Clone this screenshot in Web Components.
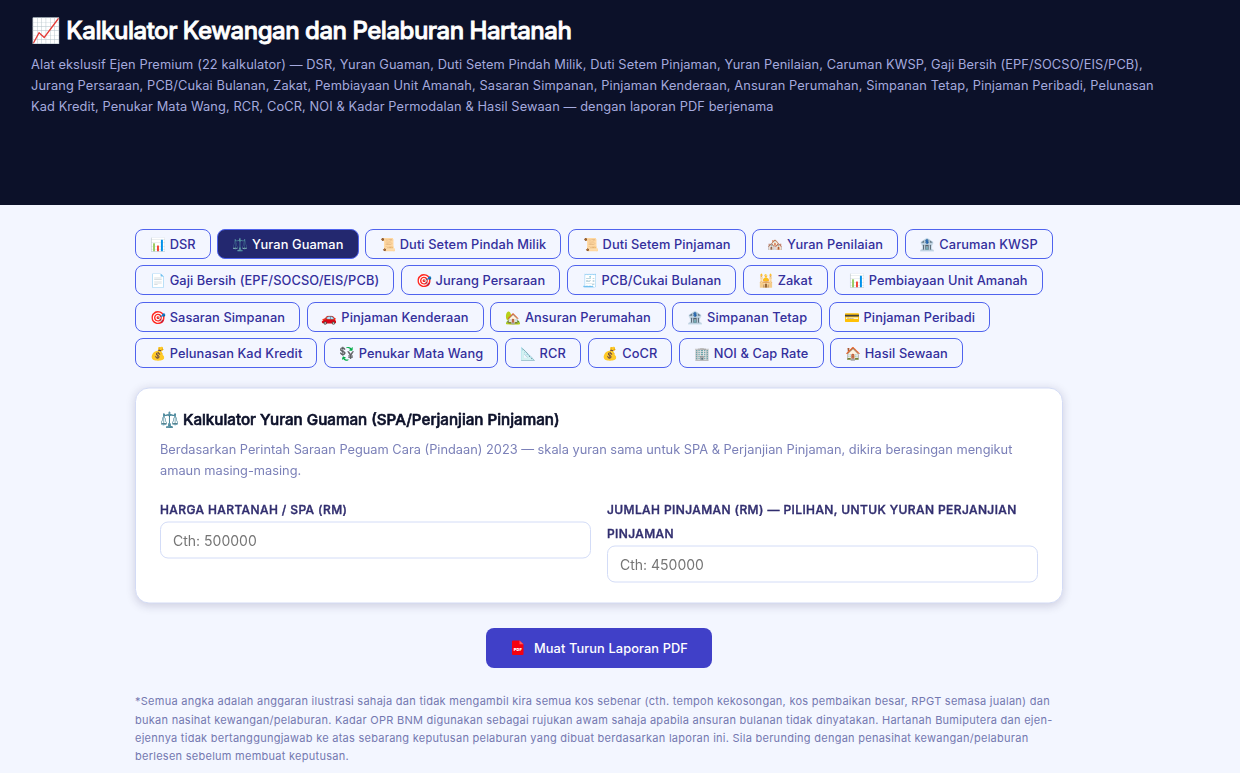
<!DOCTYPE html>
<html lang="ms">
<head>
<meta charset="utf-8">
<title>Kalkulator Kewangan dan Pelaburan Hartanah</title>
<style>
  body {
    margin: 0;
    height: 773px;
    overflow: hidden;
    background: #f3f6ff;
    font-family: Inter, "Noto Color Emoji", sans-serif;
    -webkit-font-smoothing: antialiased;
  }
</style>
</head>
<body>
<calc-page>
  <calc-header slot="header" heading="📈 Kalkulator Kewangan dan Pelaburan Hartanah">Alat ekslusif Ejen Premium (22 kalkulator) — DSR, Yuran Guaman, Duti Setem Pindah Milik, Duti Setem Pinjaman, Yuran Penilaian, Caruman KWSP, Gaji Bersih (EPF/SOCSO/EIS/PCB), Jurang Persaraan, PCB/Cukai Bulanan, Zakat, Pembiayaan Unit Amanah, Sasaran Simpanan, Pinjaman Kenderaan, Ansuran Perumahan, Simpanan Tetap, Pinjaman Peribadi, Pelunasan Kad Kredit, Penukar Mata Wang, RCR, CoCR, NOI &amp; Kadar Permodalan &amp; Hasil Sewaan — dengan laporan PDF berjenama</calc-header>
  <calc-tabs></calc-tabs>
  <calc-card heading="⚖️ Kalkulator Yuran Guaman (SPA/Perjanjian Pinjaman)">
    <span slot="note">Berdasarkan Perintah Saraan Peguam Cara (Pindaan) 2023 — skala yuran sama untuk SPA &amp; Perjanjian Pinjaman, dikira berasingan mengikut amaun masing-masing.</span>
    <calc-field placeholder="Cth: 500000">Harga Hartanah / SPA (RM)</calc-field>
    <calc-field placeholder="Cth: 450000">Jumlah Pinjaman (RM) — pilihan, untuk Yuran Perjanjian Pinjaman</calc-field>
  </calc-card>
  <pdf-button>Muat Turun Laporan PDF</pdf-button>
  <calc-disclaimer>*Semua angka adalah anggaran ilustrasi sahaja dan tidak mengambil kira semua kos sebenar (cth. tempoh kekosongan, kos pembaikan besar, RPGT semasa jualan) dan bukan nasihat kewangan/pelaburan. Kadar OPR BNM digunakan sebagai rujukan awam sahaja apabila ansuran bulanan tidak dinyatakan. Hartanah Bumiputera dan ejen-ejennya tidak bertanggungjawab ke atas sebarang keputusan pelaburan yang dibuat berdasarkan laporan ini. Sila berunding dengan penasihat kewangan/pelaburan berlesen sebelum membuat keputusan.</calc-disclaimer>
</calc-page>

<script>
class CalcPage extends HTMLElement {
  constructor() {
    super();
    const shadow = this.attachShadow({ mode: "open" });
    shadow.innerHTML = `
      <style>
      :host {
        display: block;
      }

      main {
        display: flex;
        flex-direction: column;
        width: 928px;
        margin-left: 135px;
        padding-top: 24px;
      }
      </style>
      <slot name="header"></slot>
      <main><slot></slot></main>
      `;
  }
}

class CalcHeader extends HTMLElement {
  constructor() {
    super();
    const shadow = this.attachShadow({ mode: "open" });
    shadow.innerHTML = `
      <style>
      :host {
        display: block;
        box-sizing: border-box;
        height: 205px;
        padding: 12px 73px 0 31px;
        background: #0c1129;
      }

      h1 {
        margin: 0 0 4px;
        color: #fff;
        font-size: 24px;
        font-weight: 500;
        line-height: 38px;
        letter-spacing: -0.02em;
        -webkit-text-stroke: 0.8px;
      }

      p {
        margin: 0;
        color: #a5aade;
        font-size: 12.8px;
        line-height: 21px;
        letter-spacing: 0.104px;
      }
      </style>
      <h1></h1>
      <p><slot></slot></p>
      `;
  }

  connectedCallback() {
    this.shadowRoot.querySelector("h1").textContent = this.getAttribute("heading");
  }
}

class CalcTab extends HTMLElement {
  constructor() {
    super();
    const shadow = this.attachShadow({ mode: "open" });
    shadow.innerHTML = `
      <style>
      :host {
        display: block;
      }

      button {
        display: block;
        box-sizing: border-box;
        height: 30px;
        margin: 0;
        padding: 1px 14.1px 0;
        border: 1px solid #4f63ee;
        border-radius: 8px;
        background: transparent;
        color: #332f9c;
        font: 500 12.8px/28px Inter, "Noto Color Emoji", sans-serif;
        letter-spacing: 0.1px;
        white-space: nowrap;
      }

      :host([active]) button {
        background: #23286f;
        color: #fff;
      }

      /* the ruler is pale blue instead of the stock orange */
      .pale {
        display: inline-block;
        filter: grayscale(1) sepia(1) hue-rotate(145deg) saturate(0.8) brightness(0.95);
      }
      </style>
      <button type="button"><span class="icon"></span> <slot></slot></button>
      `;

    this.addEventListener("click", () => {
      for (const tab of this.parentNode.querySelectorAll("calc-tab")) {
        tab.toggleAttribute("active", tab === this);
      }
    });
  }

  set icon(value) {
    const icon = this.shadowRoot.querySelector(".icon");
    icon.textContent = value;
    icon.classList.toggle("pale", value === "📐");
  }
}

const TABS = [
  ["📊", "DSR"],
  ["⚖️", "Yuran Guaman"],
  ["📜", "Duti Setem Pindah Milik"],
  ["📜", "Duti Setem Pinjaman"],
  ["🏘️", "Yuran Penilaian"],
  ["🏦", "Caruman KWSP"],
  ["📄", "Gaji Bersih (EPF/SOCSO/EIS/PCB)"],
  ["🎯", "Jurang Persaraan"],
  ["🧾", "PCB/Cukai Bulanan"],
  ["🕌", "Zakat"],
  ["📊", "Pembiayaan Unit Amanah"],
  ["🎯", "Sasaran Simpanan"],
  ["🚗", "Pinjaman Kenderaan"],
  ["🏡", "Ansuran Perumahan"],
  ["🏦", "Simpanan Tetap"],
  ["💳", "Pinjaman Peribadi"],
  ["💰", "Pelunasan Kad Kredit"],
  ["💱", "Penukar Mata Wang"],
  ["📐", "RCR"],
  ["💰", "CoCR"],
  ["🏢", "NOI & Cap Rate"],
  ["🏠", "Hasil Sewaan"],
];

class CalcTabs extends HTMLElement {
  constructor() {
    super();
    const shadow = this.attachShadow({ mode: "open" });
    shadow.innerHTML = `
      <style>
      :host {
        display: flex;
        flex-wrap: wrap;
        gap: 6.4px 6.55px;
        margin-bottom: 19.4px;
      }
      </style>
      `;

    TABS.forEach(([icon, label], i) => {
      const tab = document.createElement("calc-tab");
      tab.icon = icon;
      tab.textContent = label;
      tab.toggleAttribute("active", i === 1);
      shadow.appendChild(tab);
    });
  }
}

class CalcCard extends HTMLElement {
  constructor() {
    super();
    const shadow = this.attachShadow({ mode: "open" });
    shadow.innerHTML = `
      <style>
      :host {
        display: block;
        box-sizing: border-box;
        height: 216px;
        padding: 18.4px 24px 0;
        border: 1px solid #d3dbf5;
        border-radius: 14px;
        background: #fff;
        box-shadow: 0 2px 10px rgba(35, 30, 80, 0.18);
        transform: translateY(-0.5px);
        will-change: transform;
      }

      h2 {
        margin: 0 0 6px;
        color: #0c1029;
        font-size: 15.2px;
        font-weight: 500;
        line-height: 26px;
        -webkit-text-stroke: 0.6px;
      }

      p {
        margin: 0 0 17px;
        color: #7b80b8;
        font-size: 12.8px;
        line-height: 21px;
      }

      .fields {
        display: grid;
        grid-template-columns: 1fr 1fr;
        align-items: start;
        gap: 16px;
      }
      </style>
      <h2></h2>
      <p><slot name="note"></slot></p>
      <div class="fields"><slot></slot></div>
      `;
  }

  connectedCallback() {
    this.shadowRoot.querySelector("h2").textContent = this.getAttribute("heading");
  }
}

class CalcField extends HTMLElement {
  constructor() {
    super();
    const shadow = this.attachShadow({ mode: "open" });
    shadow.innerHTML = `
      <style>
      :host {
        display: block;
      }

      label {
        display: block;
        color: #312e6f;
        font-size: 12px;
        font-weight: 500;
        line-height: 24px;
        letter-spacing: 0.4px;
        text-transform: uppercase;
        -webkit-text-stroke: 0.4px;
      }

      input {
        display: block;
        box-sizing: border-box;
        width: 100%;
        height: 37px;
        margin-top: -0.4px;
        padding: 0 12px;
        border: 1px solid #d3dcf7;
        border-radius: 8px;
        background: #fff;
        color: #0c1029;
        font: 400 14px Inter, sans-serif;
      }
      </style>
      <label for="value"><slot></slot></label>
      <input id="value" inputmode="decimal">
      `;
  }

  connectedCallback() {
    this.shadowRoot.querySelector("input").placeholder = this.getAttribute("placeholder");
  }
}

class PdfButton extends HTMLElement {
  constructor() {
    super();
    const shadow = this.attachShadow({ mode: "open" });
    shadow.innerHTML = `
      <style>
      :host {
        display: block;
        align-self: center;
        margin: 24.4px 0 24px;
      }

      button {
        display: flex;
        align-items: center;
        gap: 8px;
        box-sizing: border-box;
        height: 40px;
        padding: 1px 24px 0;
        border: 0;
        border-radius: 8px;
        background: #4040c8;
        color: #fff;
        font: 500 12.8px Inter, sans-serif;
        letter-spacing: 0.1px;
      }

      svg {
        display: block;
      }
      </style>
      <button type="button">
        <svg width="16" height="16" viewBox="0 0 16 16">
          <path fill="#f5000f" d="M3 .5h6.500L13.500 4.300V14a1 1 0 0 1-1 1H3a1 1 0 0 1-1-1V1.500a1 1 0 0 1 1-1z"/>
          <path fill="#ff5a66" d="M9.500.5l4 3.800H10a.5.500 0 0 1-.5-.5z"/>
          <text x="7.800" y="10.800" fill="#fff" font-family="Inter" font-size="4" font-weight="900" text-anchor="middle">PDF</text>
        </svg>
        <slot></slot>
      </button>
      `;
  }
}

class CalcDisclaimer extends HTMLElement {
  constructor() {
    super();
    const shadow = this.attachShadow({ mode: "open" });
    shadow.innerHTML = `
      <style>
      :host {
        display: block;
        padding-top: 0.2px;
        color: #7378b0;
        font-size: 11px;
        line-height: 18.4px;
        letter-spacing: 0.265px;
      }
      </style>
      <slot></slot>
      `;
  }
}

customElements.define("calc-page", CalcPage);
customElements.define("calc-header", CalcHeader);
customElements.define("calc-tab", CalcTab);
customElements.define("calc-tabs", CalcTabs);
customElements.define("calc-card", CalcCard);
customElements.define("calc-field", CalcField);
customElements.define("pdf-button", PdfButton);
customElements.define("calc-disclaimer", CalcDisclaimer);
</script>
</body>
</html>
